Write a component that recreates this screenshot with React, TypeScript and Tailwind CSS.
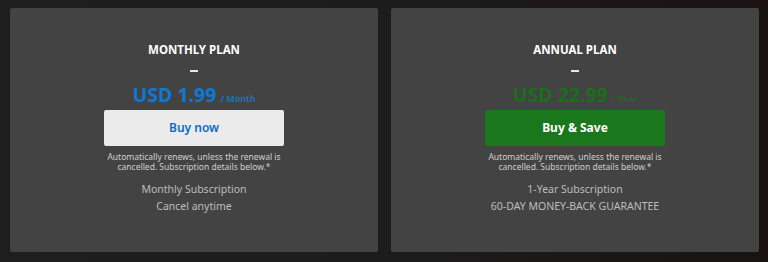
const plans = [
  {
    title: 'MONTHLY PLAN',
    price: 'USD 1.99',
    unit: '/ Month',
    priceColor: 'text-[#0f78d4]',
    button: 'Buy now',
    buttonClass: 'bg-[#ebebeb] text-[#0f6cbd] font-semibold',
    lines: ['Monthly Subscription', 'Cancel anytime'],
  },
  {
    title: 'ANNUAL PLAN',
    price: 'USD 22.99',
    unit: '/ Year',
    priceColor: 'text-[#1b6e1b]',
    button: 'Buy & Save',
    buttonClass: 'bg-[#1b771b] text-white font-bold',
    lines: ['1-Year Subscription', '60-DAY MONEY-BACK GUARANTEE'],
  },
];

export default function App() {
  return (
    <div
      className="w-[768px] h-[262px] bg-gradient-to-r from-[#1e1e1e] via-[#1c1c1c] to-[#1a1212] pt-2 pl-[10px] flex gap-[13px]"
      style={{ fontFamily: '"Noto Sans", "Open Sans", sans-serif' }}
    >
      {plans.map((p) => (
        <div
          key={p.title}
          className="w-[368px] h-[244px] bg-[#434343] rounded-[2px] flex flex-col items-center pt-[34px]"
        >
          <h2 className="text-[11.5px] font-bold text-white leading-[16px]">{p.title}</h2>
          <div className="w-[8px] h-[2px] bg-[#e6e6e6] mt-[12px]" />
          <div className="mt-[13px] flex items-baseline gap-[4px] leading-[20px]">
            <span className={`text-[19.5px] font-bold ${p.priceColor}`}>{p.price}</span>
            <span className={`text-[9px] font-semibold ${p.priceColor}`}>{p.unit}</span>
          </div>
          <button
            className={`mt-[1px] w-[180px] h-[36px] rounded-[2px] text-[12px] ${p.buttonClass}`}
          >
            {p.button}
          </button>
          <p className="mt-[6px] text-[8.5px] leading-[10px] text-[#cfcfcf] text-center">
            Automatically renews, unless the renewal is
            <br />
            cancelled. Subscription details below.*
          </p>
          <div className="mt-[11px] flex flex-col items-center gap-[4px] text-[10.5px] leading-[13px] text-[#bdbdbd]">
            {p.lines.map((l) => (
              <span key={l}>{l}</span>
            ))}
          </div>
        </div>
      ))}
    </div>
  );
}
